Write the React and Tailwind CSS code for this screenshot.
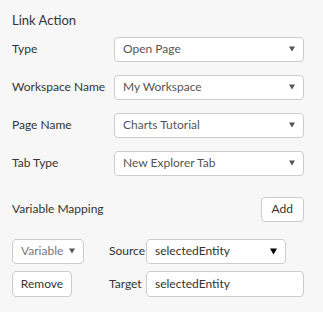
import React from 'react';

const Caret = ({ className = 'text-[#555]', size = 6 }) => (
    <svg className={className} width={size} height={size} viewBox="0 0 6 6">
        <path d="M0 0.5h6L3 5.5z" fill="currentColor" />
    </svg>
);

const Select = ({ value, className = '', textClass = 'text-[#555]', caretClass, caretSize }) => (
    <div className={`h-[25px] bg-white border border-[#ccc] rounded-[4px] flex items-center justify-between pl-[8px] pr-[8px] ${className}`}>
        <span className={`text-[12px] ${textClass}`}>{value}</span>
        <Caret className={caretClass} size={caretSize} />
    </div>
);

const Row = ({ label, value }) => (
    <div className="flex items-center">
        <div className="w-[102px] text-[12px] text-[#333]">{label}</div>
        <Select value={value} className="w-[190px]" />
    </div>
);

export default function App() {
    return (
        <div className="w-[323px] h-[312px] bg-[#f7f7f7] pl-[12px] pt-[11px] font-['Lato',sans-serif] overflow-hidden">
            <div className="text-[13px] text-[#333] mb-[6px]">Link Action</div>
            <div className="flex flex-col gap-[13px]">
                <Row label="Type" value="Open Page" />
                <Row label="Workspace Name" value="My Workspace" />
                <Row label="Page Name" value="Charts Tutorial" />
                <Row label="Tab Type" value="New Explorer Tab" />
            </div>
            <div className="flex items-center justify-between w-[292px] mt-[21px]">
                <span className="text-[12px] text-[#333]">Variable Mapping</span>
                <button className="h-[25px] px-[10px] bg-white border border-[#ccc] rounded-[4px] text-[12px] text-[#333]">Add</button>
            </div>
            <div className="flex items-center w-[292px] mt-[17px]">
                <Select value="Variable" className="w-[72px]" textClass="text-[#777]" />
                <span className="ml-[25px] w-[37px] text-[12px] text-[#333]">Source</span>
                <Select value="selectedEntity" className="w-[140px]" textClass="text-[#333]" caretClass="text-black" caretSize={7} />
            </div>
            <div className="flex items-center w-[292px] mt-[7px]">
                <button className="h-[26px] w-[60px] bg-white border border-[#ccc] rounded-[4px] text-[12px] text-[#333]">Remove</button>
                <span className="ml-[37px] w-[37px] text-[12px] text-[#333]">Target</span>
                <div className="h-[26px] w-[158px] bg-white border border-[#ccc] rounded-[4px] flex items-center pl-[8px] text-[12px] text-[#333]">selectedEntity</div>
            </div>
        </div>
    );
}
